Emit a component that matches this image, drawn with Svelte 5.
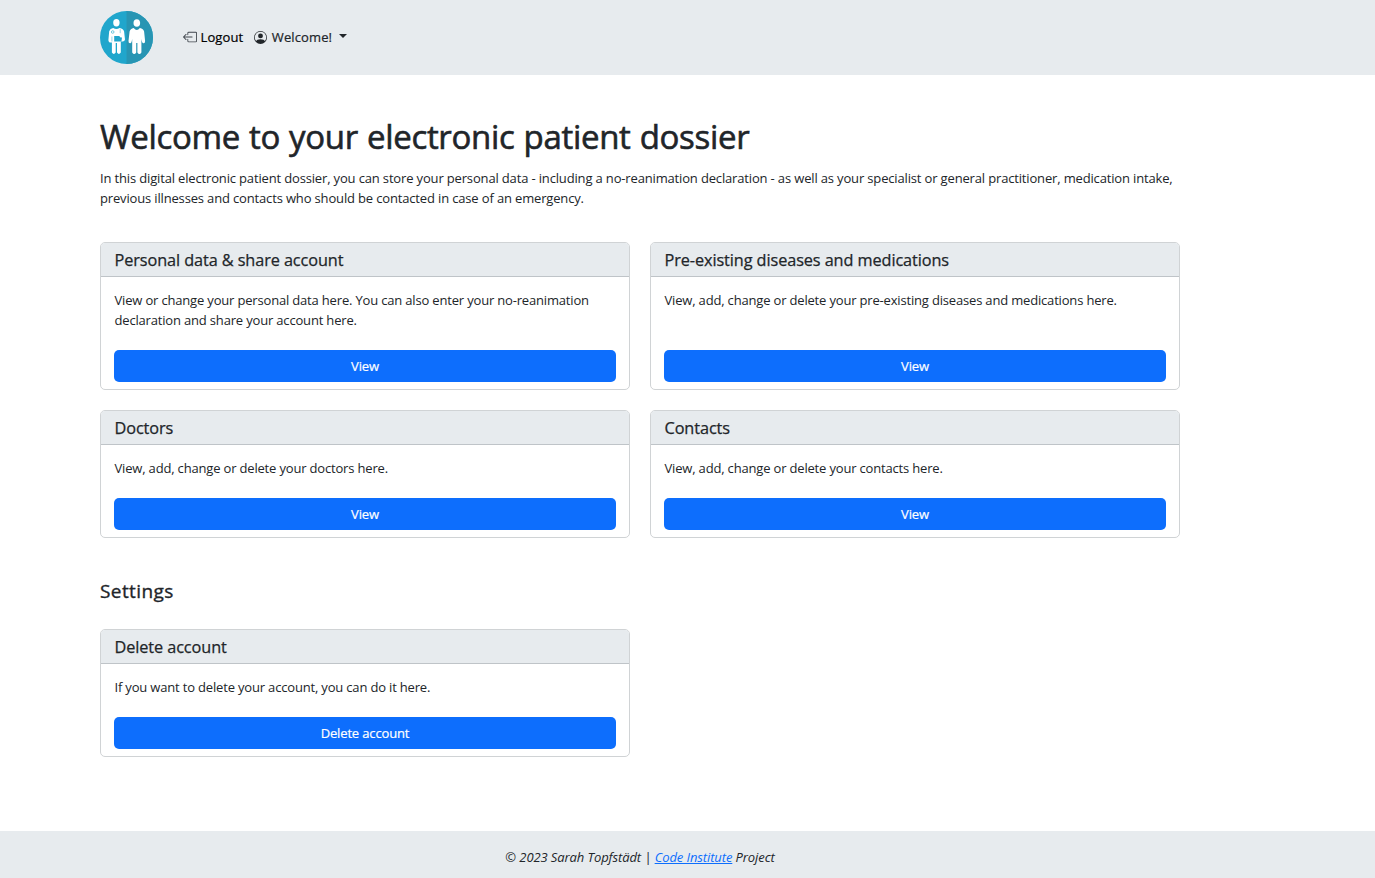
<script>
  const records = [
    { title: 'Personal data & share account', text: 'View or change your personal data here. You can also enter your no-reanimation declaration and share your account here.' },
    { title: 'Pre-existing diseases and medications', text: 'View, add, change or delete your pre-existing diseases and medications here.' },
    { title: 'Doctors', text: 'View, add, change or delete your doctors here.' },
    { title: 'Contacts', text: 'View, add, change or delete your contacts here.' }
  ];
</script>

{#snippet card(title, text, action)}
  <article class="card">
    <h3><span>{title}</span></h3>
    <div class="card-body">
      <p>{text}</p>
      <button>{action}</button>
    </div>
  </article>
{/snippet}

<div class="page">
  <header>
    <svg class="logo" viewBox="0 0 53 53" aria-label="Patient dossier">
      <circle cx="26.5" cy="26.5" r="26.5" fill="#20a6cc" />
      <path d="M26.5 0a26.5 26.5 0 0 1 0 53z" fill="#2895b3" />
      <g fill="#fff">
        <ellipse cx="16.4" cy="11.8" rx="3.2" ry="3.7" />
        <path d="M13.2 17Q16.4 19.2 19.6 17Q23.4 17.7 24.1 20.5L25 28.5Q24.7 30.4 22.5 30.4L20.8 30.4V41.5Q18.9 44.4 17 41.5V32H15.7V41.5Q13.8 44.4 11.9 41.500V31.500Q8.400 32 8.400 29L9.200 20.300Q10 17.600 13.200 17z" />
        <ellipse cx="36.800" cy="12" rx="3.300" ry="3.800" />
        <path d="M33.700 17Q36.800 21 39.900 17Q43.400 17.700 44.100 20.500L45.100 30Q45.200 32.400 43.300 32.200Q42 32 41.800 30L41.400 28V41.500Q39.400 44.600 37.400 41.500V32H36.200V41.500Q34.200 44.600 32.200 41.500V28L31.800 30Q31.600 32 30.300 32.200Q28.400 32.400 28.500 30L29.600 20.500Q30.300 17.700 33.700 17z" />
      </g>
      <path d="M14.200 25h5l1.300 1.600 1.500-.2-.6 4.200h-7.200z" fill="#20a6cc" />
      <circle cx="12.700" cy="21" r="1.300" fill="none" stroke="#60c2da" stroke-width=".9" />
      <path d="M20.200 18.200v4M11.900 25.500v5" stroke="#79cce0" stroke-width=".8" />
    </svg>
    <nav>
      <a class="logout" href="#logout">
        <svg viewBox="0 0 16 16" width="14" height="14" fill="#40464d"><path fill-rule="evenodd" d="M6 12.500a.5.5 0 0 0 .5.5h8a.5.5 0 0 0 .5-.5v-9a.5.5 0 0 0-.5-.5h-8a.5.5 0 0 0-.5.5v2a.5.5 0 0 1-1 0v-2A1.500 1.500 0 0 1 6.500 2h8A1.500 1.500 0 0 1 16 3.500v9a1.500 1.500 0 0 1-1.500 1.500h-8A1.500 1.500 0 0 1 5 12.500v-2a.5.5 0 0 1 1 0v2z" /><path fill-rule="evenodd" d="M.146 8.354a.5.5 0 0 1 0-.708l3-3a.5.5 0 1 1 .708.708L1.707 7.500H10.500a.5.5 0 0 1 0 1H1.707l2.147 2.146a.5.5 0 0 1-.708.708l-3-3z" /></svg>
        <span>Logout</span>
      </a>
      <a class="welcome" href="#account">
        <svg viewBox="0 0 16 16" width="13" height="13" fill="#212529"><path d="M11 6a3 3 0 1 1-6 0 3 3 0 0 1 6 0z" /><path fill-rule="evenodd" d="M0 8a8 8 0 1 1 16 0A8 8 0 0 1 0 8zm8-7a7 7 0 0 0-5.468 11.370C3.242 11.226 4.805 10 8 10s4.757 1.225 5.468 2.370A7 7 0 0 0 8 1z" /></svg>
        <span>Welcome!</span><i class="caret"></i>
      </a>
    </nav>
  </header>

  <main>
    <h1><span>Welcome to your electronic patient dossier</span></h1>
    <p class="intro">In this digital electronic patient dossier, you can store your personal data - including a no-reanimation declaration - as well as your specialist or general practitioner, medication intake,<br />previous illnesses and contacts who should be contacted in case of an emergency.</p>
    <section class="grid">
      {#each records as record}
        {@render card(record.title, record.text, 'View')}
      {/each}
    </section>
    <h2>Settings</h2>
    <section class="grid">
      {@render card('Delete account', 'If you want to delete your account, you can do it here.', 'Delete account')}
    </section>
  </main>

  <footer><span>© 2023 Sarah Topfstädt | <a href="#institute">Code Institute</a> Project</span></footer>
</div>

<style>
  :global(body) { margin: 0; }
  .page { height: 878px; display: flex; flex-direction: column; overflow: hidden; background: #fff; color: #212529; font: 400 13px/20px "Open Sans", "Noto Sans", sans-serif; }
  header { height: 75px; box-sizing: border-box; padding-left: 100px; display: flex; align-items: center; background: #e7ebee; }
  .logo { width: 53px; height: 53px; flex: none; }
  nav { display: flex; margin-left: 30px; gap: 10.500px; margin-top: -1px; }
  nav a { display: flex; align-items: center; color: #212529; text-decoration: none; letter-spacing: .12px; -webkit-text-stroke: .2px currentColor; }
  nav a svg { flex: none; margin-right: 3.500px; }
  .logout { color: #000; }
  .welcome svg { margin-right: 5px; }
  .caret { border: 4px solid transparent; border-top-color: #212529; border-bottom: 0; margin: -2px 0 0 6.500px; }
  main { flex: 1; width: 1080px; margin-left: 100px; }
  h1, h2, h3, p { margin: 0; }
  h1, h2, h3 { font-weight: 400; -webkit-text-stroke: .25px currentColor; }
  h1 { margin-top: 41px; font-size: 33px; line-height: 41px; letter-spacing: -.31px; word-spacing: .8px; white-space: nowrap; -webkit-text-stroke-width: .6px; }
  .intro { margin-top: 11px; white-space: nowrap; letter-spacing: -.16px; word-spacing: .03px; font-weight: 400; }
  .grid { display: grid; grid-template-columns: 530px 530px; gap: 20px; margin-top: 34px; }
  .card { box-sizing: border-box; border: 1px solid #d0d3d5; border-radius: 5px; overflow: hidden; display: flex; flex-direction: column; }
  h3 { height: 34px; box-sizing: border-box; padding: 0 13.500px; border-bottom: 1px solid #bfc4c8; background: #e7ebee; font-size: 16.250px; line-height: 34px; letter-spacing: -.08px; }
  .card-body { flex: 1; display: flex; flex-direction: column; padding: 13px 13px 7px; }
  .card-body p { flex: 1; margin-bottom: 20px; padding-left: .5px; letter-spacing: -.175px; }
  button { height: 32px; border: 0; border-radius: 5px; padding: 0; background: #0d6efd; color: #fff; font: inherit; letter-spacing: -.14px; -webkit-text-stroke: .2px currentColor; }
  h2 { margin-top: 41px; font-size: 19px; line-height: 24px; letter-spacing: .42px; -webkit-text-stroke-width: .35px; }
  h2 + .grid { margin-top: 26px; }
  footer { height: 47px; box-sizing: border-box; padding: 16px 95px 0 0; text-align: center; background: #e7ebee; font-style: italic; letter-spacing: -.1px; }
  footer a { color: #0d6efd; }
</style>
